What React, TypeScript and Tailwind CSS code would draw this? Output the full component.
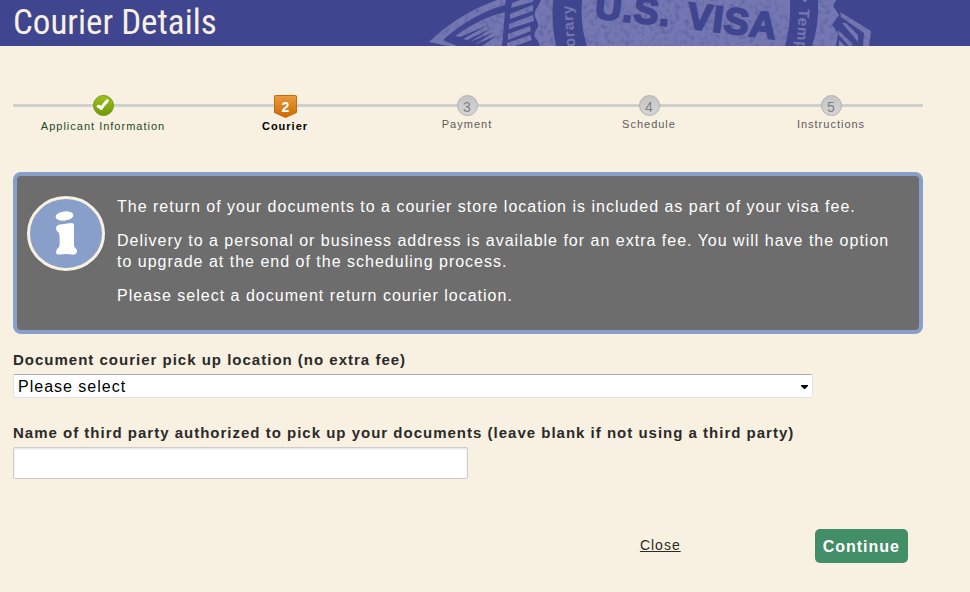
import React from "react";

const STEPS = [
  { id: 1, label: "Applicant Information", state: "done" },
  { id: 2, label: "Courier", state: "current" },
  { id: 3, label: "Payment", state: "todo" },
  { id: 4, label: "Schedule", state: "todo" },
  { id: 5, label: "Instructions", state: "todo" },
];

const LABEL_STYLES: Record<string, string> = {
  done: "text-[#1f4a1f] pt-[3px]",
  current: "text-black font-bold pt-px",
  todo: "text-[#5c5c5c] pt-px",
};

function Seal() {
  return (
    <svg aria-hidden="true" viewBox="425 0 455 46" className="absolute top-0 right-[90px] w-[455px] h-[46px]">
      <defs>
        <filter id="grain" x="0" y="0" width="1" height="1" colorInterpolationFilters="sRGB">
          <feTurbulence type="fractalNoise" baseFrequency="0.2" numOctaves="2" seed="4" />
          <feColorMatrix values="0 0 0 0 0.25  0 0 0 0 0.27  0 0 0 0 0.56  0 0 0 1 -0.48" />
          <feComposite in2="SourceGraphic" operator="in" />
          <feMerge>
            <feMergeNode in="SourceGraphic" />
            <feMergeNode />
          </feMerge>
        </filter>
      </defs>
      <g fill="#7477b1" filter="url(#grain)">
        {/* left wing */}
        <path d="M429 42 Q458 14 497 0 H506 L505 5 Q472 14 443 40 L457 46 H448 Z" />
        <path d="M505 12 Q480 18 455 36 L460 37 L488 25 L463 39 L467 40 L492 28 L470 42 L494 32 L474 45 L496 36 L482 46 H502 Z" />
        <path d="M512 3 L520 0 H534 L532 2 L511 8 Z" />
        <path d="M510 14 L533 5 V11 L510 19 Z" />
        <path d="M509 24 L533 15 L534 21 L509 29 Z" />
        <path d="M508 34 L530 26 L531 31 L508 40 Z" />
        <path d="M507 43 L530 35 L532 40 L515 46 H507 Z" />
        <path d="M541 0 L538 6 Q532 14 537 21 Q540 26 536 30 Q532 36 538 41 L540 46 H556 Q551 22 553 0 Z" />
        {/* centre disc */}
        <path d="M582 0 H790 Q791 26 785 46 H587 Q580 26 582 0 Z" />
        {/* right wing */}
        <path d="M818 0 H836 L833 6 L839 15 L832 25 L838 33 L836 46 H812 Q819 26 818 0 Z" />
        <path d="M840 12 L871 31 L869 46 H863 L864 33 L841 17 Z" />
        <path d="M842 23 H846 L858 35 V42 Z" />
        <path d="M836 32 L839 31 L853 44 L852 46 H849 Z" />
        <path d="M839 40 L845 46 H839 Z" />
      </g>
      <g fontFamily="Liberation Sans, sans-serif" fontWeight="bold">
        <g fill="#40458f" stroke="#40458f" strokeWidth="2" fontSize="37">
          <text x="594" y="18" transform="rotate(6 594 18)">U.S.</text>
          <text x="686" y="28" transform="rotate(7 686 28)">VISA</text>
        </g>
        <g fill="#7477b1" fontSize="15">
          <text transform="translate(576 57) rotate(-94)">porary</text>
          <text transform="translate(800 -3) rotate(94)">• Temp</text>
        </g>
      </g>
    </svg>
  );
}

function StepMarker({ id, state }: { id: number; state: string }) {
  if (state === "done") {
    return (
      <svg width="21" height="21" viewBox="0 0 21 21" role="img" aria-label="Completed">
        <defs>
          <linearGradient id="green" x2="0" y2="1">
            <stop offset="0" stopColor="#9fc01f" />
            <stop offset="1" stopColor="#6f9a04" />
          </linearGradient>
        </defs>
        <circle cx="10.5" cy="10.5" r="10" fill="url(#green)" stroke="#729a10" />
        <path d="M3.5 11 L6 9.5 L8 11 Q10.5 7 14 4 L15.5 4.5 V7 Q11.5 10.5 9 15 H7.5 Q6 13 3.5 12 Z" fill="#fff" />
      </svg>
    );
  }
  if (state === "current") {
    return (
      <svg width="23" height="23" viewBox="0 0 23 23" className="font-bold">
        <defs>
          <linearGradient id="orange" x2="0" y2="1">
            <stop offset="0" stopColor="#ea9a3e" />
            <stop offset="1" stopColor="#cc6a00" />
          </linearGradient>
        </defs>
        <path d="M1.5 .5 H21.5 Q22.5 .5 22.5 1.5 V17.5 L11.5 22.5 L.5 17.5 V1.5 Q.5 .5 1.5 .5 Z" fill="url(#orange)" stroke="#c26a0c" />
        <text x="12" y="17" textAnchor="middle" fontSize="14" fill="#fff">{id}</text>
      </svg>
    );
  }
  return (
    <span className="flex items-center justify-center size-[21px] pt-[3px] pl-px rounded-full border border-[#b0b0b0] bg-linear-to-b from-[#c4c4c4] to-[#d6d6d6] text-sm leading-4 text-[#808080]">
      {id}
    </span>
  );
}

function Progress() {
  return (
    <ol className="relative grid grid-cols-5 h-[77px]">
      <li aria-hidden="true" className="absolute inset-x-0 top-[9px] h-[3px] bg-[#cfcfcf]" />
      {STEPS.map((step) => (
        <li key={step.id} className="relative flex flex-col items-center pr-0.5 text-[11px] leading-[14px]">
          <StepMarker id={step.id} state={step.state} />
          <span className={LABEL_STYLES[step.state]}>{step.label}</span>
        </li>
      ))}
    </ol>
  );
}

function InfoBox() {
  return (
    <section className="flex gap-3 rounded-lg border-4 border-[#889fca] bg-[#6d6d6d] pt-5 pb-6 pl-[10px] pr-3 text-base leading-[21px] text-white">
      <svg width="78" height="75" viewBox="0 0 78 75" className="shrink-0" role="img" aria-label="Information">
        <ellipse cx="39" cy="37.5" rx="37.5" ry="36" fill="#889fca" stroke="#f8f0e0" strokeWidth="3" />
        <ellipse cx="37.5" cy="20" rx="9" ry="4.6" fill="#fff" transform="rotate(-7 37.5 20)" />
        <path d="M29 32 Q29 29 33 28.5 L44 27 Q47 27 47 29 V49 Q47 51 49 52.5 Q51 55 49 57.5 Q48 59 45 58.5 Q39 57.5 33 58.5 Q29 59 29 56 Q29 53 32 51 Q33 49 32.5 39 Q32 36 30 35 Q29 34 29 32 Z" fill="#fff" />
      </svg>
      <div className="flex flex-col gap-[13px]">
        <p>The return of your documents to a courier store location is included as part of your visa fee.</p>
        <p>
          Delivery to a personal or business address is available for an extra fee. You will have the option to
          upgrade at the end of the scheduling process.
        </p>
        <p>Please select a document return courier location.</p>
      </div>
    </section>
  );
}

export default function App() {
  return (
    <div className="min-h-screen bg-[#f8f0e0] font-['Liberation_Sans',Arial,sans-serif] tracking-[1px] text-[#2a2a2a]">
      <header className="relative h-[46px] overflow-hidden bg-[#40458f] pl-[13px]">
        <Seal />
        <h1 className="relative text-[35px] leading-[46px] tracking-normal text-[#f8f0e0] font-['Roboto_Condensed','Liberation_Sans',sans-serif]">
          Courier Details
        </h1>
      </header>

      <main className="pt-[49px] pl-[13px] pr-[47px] pb-7">
        <Progress />
        <InfoBox />

        <form onSubmit={(e) => e.preventDefault()}>
          <label htmlFor="location" className="block pt-4 text-[15px] leading-5 font-bold">
            Document courier pick up location (no extra fee)
          </label>
          <div className="relative mt-1 max-w-[800px]">
            <select
              id="location"
              className="block w-full h-6 appearance-none rounded-xs border border-[#e2e3ea] border-t-[#abadb3] bg-white pt-px pl-1 pr-6 text-base leading-5 tracking-[1px] text-black"
            >
              <option>Please select</option>
            </select>
            <svg aria-hidden="true" width="7" height="4" viewBox="0 0 7 4" className="pointer-events-none absolute right-[5px] top-[11px]">
              <path d="M0 0 H7 V1 L4 4 H3 L0 1 Z" fill="#000" />
            </svg>
          </div>

          <label htmlFor="third-party" className="block pt-[25px] text-[15px] leading-5 font-bold">
            Name of third party authorized to pick up your documents (leave blank if not using a third party)
          </label>
          <input
            id="third-party"
            type="text"
            className="mt-1 block h-8 w-1/2 rounded-xs border border-[#ccc] bg-white px-2 shadow-[inset_0_1px_2px_rgba(0,0,0,0.12)]"
          />

          <div className="flex items-center justify-end gap-[134px] pt-[50px] pr-[15px]">
            <a href="#" className="pb-0.5 text-sm leading-5 underline">Close</a>
            <button type="submit" className="h-[34px] rounded-[5px] bg-[#428e67] px-2 pt-0.5 text-base font-bold tracking-[1px] text-white">
              Continue
            </button>
          </div>
        </form>
      </main>
    </div>
  );
}
